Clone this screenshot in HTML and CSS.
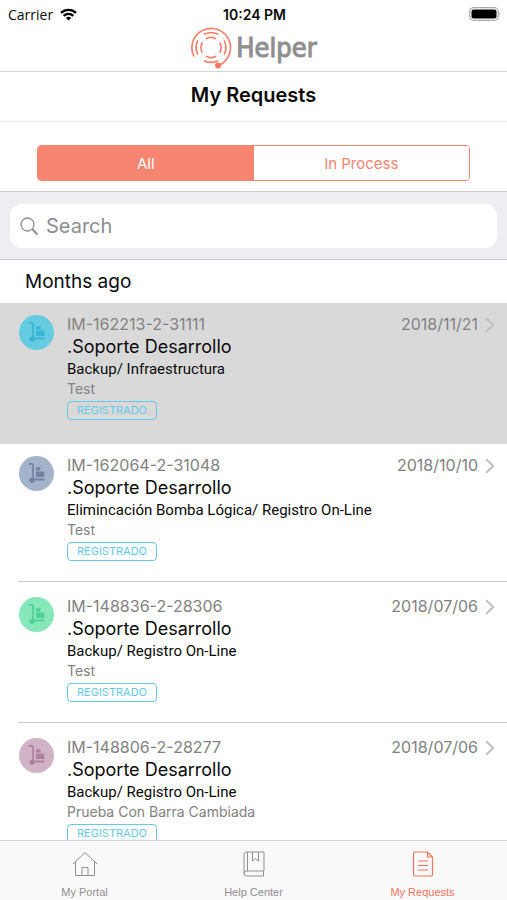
FILE: index.html
```html
<!DOCTYPE html>
<html lang="en">
<head>
<meta charset="utf-8">
<meta name="viewport" content="width=device-width, initial-scale=1">
<title>Helper - My Requests</title>
<link rel="stylesheet" href="styles.css">
</head>
<body>
<svg class="defs" aria-hidden="true">
  <symbol id="cart" viewBox="0 0 36 36">
    <path d="M10 8h3.500l1 1v15" fill="none" stroke="currentColor" stroke-width="1.800"/>
    <circle cx="13.300" cy="25" r="2.700" fill="currentColor"/>
    <path d="M14.500 23.200h11.500v2H14.500zM17.500 11.500h4.500v3.500h-4.500zM17.500 16h8.500v5.500h-8.500z" fill="currentColor"/>
  </symbol>
  <symbol id="chevron" viewBox="0 0 10 16">
    <path d="M1.200 1.200L8.200 8l-7 6.800" fill="none" stroke="currentColor" stroke-width="2.200"/>
  </symbol>
</svg>
<div class="app">
  <header>
    <div class="status">
      <span class="carrier">Carrier
        <svg width="17" height="13" viewBox="0 0 17 13" aria-hidden="true"><g fill="none" stroke="#000" stroke-width="2.300"><path d="M1 4.900a10.600 10.600 0 0 1 15 0"/><path d="M3.700 7.900a6.800 6.800 0 0 1 9.600 0"/></g><path d="M8.500 12.600L5.900 10a3.700 3.700 0 0 1 5.200 0z"/></svg>
      </span>
      <span class="time">10:24 PM</span>
      <svg class="battery" width="32" height="14" viewBox="0 0 32 14" aria-hidden="true"><rect x=".7" y=".7" width="28.600" height="12.600" rx="4" fill="#fff" stroke="#aaa" stroke-width="1.200"/><rect x="2.500" y="2.500" width="25" height="9" rx="2"/><path d="M30.500 5q1.500 2 0 4z" fill="#888"/></svg>
    </div>
    <div class="brand">
      <svg width="42" height="43" viewBox="0 0 42 43" aria-hidden="true">
        <g fill="none" stroke="#f5826f" stroke-width="1.700" stroke-linecap="round">
          <path d="M3.700 29.800A19.300 19.300 0 1 1 28 39.700"/>
          <path d="M14.500 8.100a15 15 0 0 1 13 0M14.500 34.900a15 15 0 0 0 13 0M7.600 15a15 15 0 0 0 0 13M34.400 15a15 15 0 0 1 0 13"/>
          <path d="M16.500 12.500a10.100 10.100 0 0 1 9 0M16.500 30.500a10.100 10.100 0 0 0 9 0M12 17a10.100 10.100 0 0 0 0 9M30 17a10.100 10.100 0 0 1 0 9"/>
        </g>
        <circle cx="28" cy="39.500" r="2.900" fill="#f5735f"/>
      </svg>
      <span>Helper</span>
    </div>
  </header>
  <h1>My Requests</h1>
  <div class="filter">
    <div class="segments">
      <button type="button" class="active" aria-pressed="true">All</button>
      <button type="button" aria-pressed="false">In Process</button>
    </div>
  </div>
  <form class="search">
    <label class="search-box">
      <svg width="19" height="19" viewBox="0 0 19 19" aria-hidden="true"><g fill="none" stroke="#8e8e93"><circle cx="7.500" cy="7.500" r="6.500" stroke-width="1.300"/><path d="M12.300 12.300l5.200 5.200" stroke-width="2"/></g></svg>
      <input type="search" placeholder="Search" aria-label="Search">
    </label>
  </form>
  <main>
    <h2>Months ago</h2>
    <ul class="requests">
      <li class="request selected">
        <span class="avatar cyan"><svg aria-hidden="true"><use href="#cart"/></svg></span>
        <div class="details">
          <div class="meta"><span>IM-162213-2-31111</span><time>2018/11/21</time></div>
          <h3>.Soporte Desarrollo</h3>
          <p class="category">Backup/ Infraestructura</p>
          <p class="note">Test</p>
          <span class="tag">REGISTRADO</span>
        </div>
        <svg class="chevron" aria-hidden="true"><use href="#chevron"/></svg>
      </li>
      <li class="request">
        <span class="avatar slate"><svg aria-hidden="true"><use href="#cart"/></svg></span>
        <div class="details">
          <div class="meta"><span>IM-162064-2-31048</span><time>2018/10/10</time></div>
          <h3>.Soporte Desarrollo</h3>
          <p class="category">Elimincación Bomba Lógica/ Registro On-Line</p>
          <p class="note">Test</p>
          <span class="tag">REGISTRADO</span>
        </div>
        <svg class="chevron" aria-hidden="true"><use href="#chevron"/></svg>
      </li>
      <li class="request">
        <span class="avatar green"><svg aria-hidden="true"><use href="#cart"/></svg></span>
        <div class="details">
          <div class="meta"><span>IM-148836-2-28306</span><time>2018/07/06</time></div>
          <h3>.Soporte Desarrollo</h3>
          <p class="category">Backup/ Registro On-Line</p>
          <p class="note">Test</p>
          <span class="tag">REGISTRADO</span>
        </div>
        <svg class="chevron" aria-hidden="true"><use href="#chevron"/></svg>
      </li>
      <li class="request">
        <span class="avatar mauve"><svg aria-hidden="true"><use href="#cart"/></svg></span>
        <div class="details">
          <div class="meta"><span>IM-148806-2-28277</span><time>2018/07/06</time></div>
          <h3>.Soporte Desarrollo</h3>
          <p class="category">Backup/ Registro On-Line</p>
          <p class="note">Prueba Con Barra Cambiada</p>
          <span class="tag">REGISTRADO</span>
        </div>
        <svg class="chevron" aria-hidden="true"><use href="#chevron"/></svg>
      </li>
    </ul>
  </main>
  <nav>
    <a href="#portal">
      <svg width="26" height="26" viewBox="0 0 26 26" aria-hidden="true"><path d="M1 13L13 1.500 25 13M3.500 11v13.500h19V11M10 24.500v-8h6v8" fill="none" stroke="currentColor"/></svg>
      My Portal
    </a>
    <a href="#help">
      <svg width="26" height="26" viewBox="0 0 26 26" aria-hidden="true"><path d="M23 1H5.500Q3 1 3 3.500v19Q3 25 5.500 25h17v-5M23 1v19H5.500Q3 20 3 22.500M6.500 1v19M11.500 1v9l3-2.500 3 2.500V1" fill="none" stroke="currentColor"/></svg>
      Help Center
    </a>
    <a href="#requests" class="current" aria-current="page">
      <svg width="26" height="26" viewBox="0 0 26 26" aria-hidden="true"><path d="M17.500 1H5Q3.500 1 3.500 2.500v21Q3.500 25 5 25h16q1.500 0 1.500-1.500V6zM17.500 1v5h5M8 10h10M8 14.500h10M8 19h10" fill="none" stroke="currentColor" stroke-width="1.200"/></svg>
      My Requests
    </a>
  </nav>
</div>
</body>
</html>
```
FILE: styles.css
```css
* { box-sizing: border-box; }
body { margin: 0; background: #fff; color: #0a0a0a; font-family: Inter, "Liberation Sans", sans-serif; }
h1, h2, h3, p, ul { margin: 0; padding: 0; }
.defs { display: none; }
.app { display: flex; flex-direction: column; height: 100vh; }

header { border-bottom: 1px solid #d2d2d2; }
.status { display: grid; grid-template-columns: 1fr auto 1fr; align-items: center; height: 26px; padding: 2px 6px 0 8px; font-size: 14px; }
.carrier { display: flex; align-items: center; gap: 7px; font-family: "Open Sans", sans-serif; }
.time { font-weight: 600; }
.battery { justify-self: end; }
.brand { display: flex; justify-content: center; align-items: center; gap: 4px; height: 45px; padding-bottom: 2px; }
.brand span { font: 27px/36px "DejaVu Sans Condensed", "Noto Sans", sans-serif; color: #8f8f8f; -webkit-text-stroke: 1px #8f8f8f; }

h1 { height: 50px; border-bottom: 1px solid #e9e9e9; font-size: 20px; font-weight: 600; line-height: 46px; text-align: center; }
.filter { padding: 23px 37px 10px; }
.segments { display: flex; border: 1px solid #f58470; border-radius: 4px; overflow: hidden; }
.segments button { flex: 1; height: 34px; border: 0; background: #fff; color: #f58470; font: 15px/34px Inter, sans-serif; }
.segments .active { background: #f58470; color: #fff; }

.search { padding: 12px 10px 11px; background: #eeeef2; border: solid #cbcbcf; border-width: 1px 0; }
.search-box { display: flex; align-items: center; gap: 7px; height: 44px; padding: 0 10px; border-radius: 12px; background: #fff; }
.search input { flex: 1; min-width: 0; border: 0; outline: 0; padding: 0; background: none; font: 20px/24px Inter, sans-serif; }
.search input::placeholder { color: #8e8e93; opacity: 1; }

main { flex: 1; min-height: 0; overflow: hidden; }
h2 { height: 43px; padding-left: 25px; font-size: 19px; font-weight: 400; line-height: 44px; }
.requests { list-style: none; }
.request { display: flex; height: 141px; padding: 15px 12px 0 19px; background: linear-gradient(#ccc, #ccc) 18px 100% / 100% 1px no-repeat; }
.selected { padding-top: 12px; background: #d9d9d9; }
.selected + .request { height: 138px; padding-top: 12px; }
.avatar { display: grid; width: 35px; height: 35px; border-radius: 50%; }
.avatar svg { width: 35px; height: 35px; }
.cyan { background: #64cbe0; color: #38b6d3; }
.slate { background: #a3b3cb; color: #71839f; }
.green { background: #86e7b9; color: #52cf98; }
.mauve { background: #d2b3c6; color: #ae819f; }
.details { flex: 1; min-width: 0; padding-left: 13px; }
.meta { display: flex; justify-content: space-between; color: #828282; font-size: 16px; line-height: 18px; }
h3 { font-size: 18px; font-weight: 400; line-height: 27px; }
.category { font: 15px/19px Roboto, sans-serif; }
.note { color: #828282; font-size: 14px; line-height: 20px; }
.tag { display: inline-block; vertical-align: top; margin-top: 2px; padding: 0 9px; border: 1px solid #66c9e8; border-radius: 4px; color: #66c9e8; font-size: 11px; line-height: 17px; }
.chevron { width: 10px; height: 16px; margin: 2px 0 0 7px; color: #c2c2c4; }

nav { display: flex; height: 60px; border-top: 1px solid #d4d4d4; background: #f9f9f9; }
nav a { flex: 1; display: flex; flex-direction: column; align-items: center; gap: 8px; padding-top: 10px; color: #8f8f8f; font: 11px/14px "Liberation Sans", sans-serif; text-decoration: none; }
nav .current { color: #f5735f; }
```
